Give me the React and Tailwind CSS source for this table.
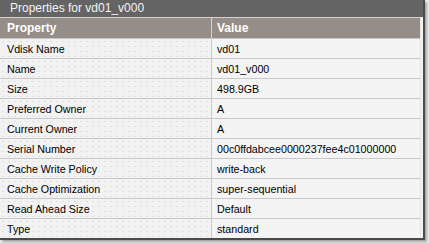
import React from "react";

// Properties panel for a volume copy: title bar, two-column table.
const rows = [
  ["Vdisk Name", "vd01"],
  ["Name", "vd01_v000"],
  ["Size", "498.9GB"],
  ["Preferred Owner", "A"],
  ["Current Owner", "A"],
  ["Serial Number", "00c0ffdabcee0000237fee4c01000000"],
  ["Cache Write Policy", "write-back"],
  ["Cache Optimization", "super-sequential"],
  ["Read Ahead Size", "Default"],
  ["Type", "standard"],
];

export default function App() {
  return (
    <div className="w-[429px] h-[243px] bg-[#ececec] font-['Liberation_Sans',Arial,sans-serif] overflow-hidden">
      <div className="w-[425px] bg-[#f3f3f3] border-r-2 border-b-2 border-[#4a4a4a] shadow-[2px_2px_2px_rgba(0,0,0,0.3)]">
        {/* title bar */}
        <div className="h-[17px] bg-[#646464] text-[#f4f4f4] text-[12px] leading-[17px] pl-[10px]">
          Properties for vd01_v000
        </div>
        <div className="border-t border-[#d6d2cf] mr-[2px] border-r border-r-[#e6e6e6]">
          {/* column header */}
          <div className="flex h-[20px] bg-[#958e88] text-white font-bold text-[12px] leading-[20px]">
            <div className="w-[212px] pl-[7px] border-r border-[#d8d4d0]">Property</div>
            <div className="flex-1 pl-[5px]">Value</div>
          </div>
          {rows.map(([name, value]) => (
            <div
              key={name}
              className="flex h-[20px] text-[10.7px] leading-[20px] text-black border-t border-[#c8c8c8]"
            >
              <div className="w-[212px] pl-[7px] border-r border-[#c8c8c8] bg-[#f2f2f2] bg-[radial-gradient(#e0e0e0_0.5px,transparent_0.6px)] bg-[size:6px_5px]">
                {name}
              </div>
              <div className="flex-1 pl-[5px] bg-[#f4f4f4]">{value}</div>
            </div>
          ))}
        </div>
      </div>
    </div>
  );
}
